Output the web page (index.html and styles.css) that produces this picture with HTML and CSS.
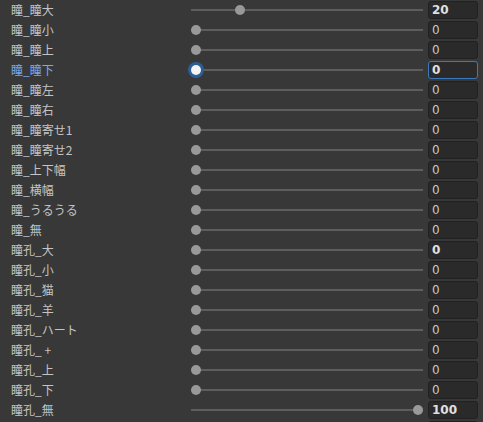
FILE: index.html
```html
<!DOCTYPE html>
<html>
<head>
    <meta charset="UTF-8">
    <title>BlendShapes</title>
    <link rel="stylesheet" href="styles.css">
</head>
<body>
    <div class="inspector">
        <div class="row">
            <div class="label">瞳_瞳大</div>
            <div class="slider" style="--v:20"><div class="track"></div><div class="thumb"></div></div>
            <div class="field bold">20</div>
        </div>
        <div class="row">
            <div class="label">瞳_瞳小</div>
            <div class="slider" style="--v:0"><div class="track"></div><div class="thumb"></div></div>
            <div class="field">0</div>
        </div>
        <div class="row">
            <div class="label">瞳_瞳上</div>
            <div class="slider" style="--v:0"><div class="track"></div><div class="thumb"></div></div>
            <div class="field">0</div>
        </div>
        <div class="row focused">
            <div class="label">瞳_瞳下</div>
            <div class="slider" style="--v:0"><div class="track"></div><div class="thumb"></div></div>
            <div class="field bold">0</div>
        </div>
        <div class="row">
            <div class="label">瞳_瞳左</div>
            <div class="slider" style="--v:0"><div class="track"></div><div class="thumb"></div></div>
            <div class="field">0</div>
        </div>
        <div class="row">
            <div class="label">瞳_瞳右</div>
            <div class="slider" style="--v:0"><div class="track"></div><div class="thumb"></div></div>
            <div class="field">0</div>
        </div>
        <div class="row">
            <div class="label">瞳_瞳寄せ1</div>
            <div class="slider" style="--v:0"><div class="track"></div><div class="thumb"></div></div>
            <div class="field">0</div>
        </div>
        <div class="row">
            <div class="label">瞳_瞳寄せ2</div>
            <div class="slider" style="--v:0"><div class="track"></div><div class="thumb"></div></div>
            <div class="field">0</div>
        </div>
        <div class="row">
            <div class="label">瞳_上下幅</div>
            <div class="slider" style="--v:0"><div class="track"></div><div class="thumb"></div></div>
            <div class="field">0</div>
        </div>
        <div class="row">
            <div class="label">瞳_横幅</div>
            <div class="slider" style="--v:0"><div class="track"></div><div class="thumb"></div></div>
            <div class="field">0</div>
        </div>
        <div class="row">
            <div class="label">瞳_うるうる</div>
            <div class="slider" style="--v:0"><div class="track"></div><div class="thumb"></div></div>
            <div class="field">0</div>
        </div>
        <div class="row">
            <div class="label">瞳_無</div>
            <div class="slider" style="--v:0"><div class="track"></div><div class="thumb"></div></div>
            <div class="field">0</div>
        </div>
        <div class="row">
            <div class="label">瞳孔_大</div>
            <div class="slider" style="--v:0"><div class="track"></div><div class="thumb"></div></div>
            <div class="field bold">0</div>
        </div>
        <div class="row">
            <div class="label">瞳孔_小</div>
            <div class="slider" style="--v:0"><div class="track"></div><div class="thumb"></div></div>
            <div class="field">0</div>
        </div>
        <div class="row">
            <div class="label">瞳孔_猫</div>
            <div class="slider" style="--v:0"><div class="track"></div><div class="thumb"></div></div>
            <div class="field">0</div>
        </div>
        <div class="row">
            <div class="label">瞳孔_羊</div>
            <div class="slider" style="--v:0"><div class="track"></div><div class="thumb"></div></div>
            <div class="field">0</div>
        </div>
        <div class="row">
            <div class="label">瞳孔_ハート</div>
            <div class="slider" style="--v:0"><div class="track"></div><div class="thumb"></div></div>
            <div class="field">0</div>
        </div>
        <div class="row">
            <div class="label">瞳孔_ +</div>
            <div class="slider" style="--v:0"><div class="track"></div><div class="thumb"></div></div>
            <div class="field">0</div>
        </div>
        <div class="row">
            <div class="label">瞳孔_上</div>
            <div class="slider" style="--v:0"><div class="track"></div><div class="thumb"></div></div>
            <div class="field">0</div>
        </div>
        <div class="row">
            <div class="label">瞳孔_下</div>
            <div class="slider" style="--v:0"><div class="track"></div><div class="thumb"></div></div>
            <div class="field">0</div>
        </div>
        <div class="row">
            <div class="label">瞳孔_無</div>
            <div class="slider" style="--v:100"><div class="track"></div><div class="thumb"></div></div>
            <div class="field bold">100</div>
        </div>
        <div class="row">
            <div class="label"></div>
            <div class="slider"></div>
            <div class="field"></div>
        </div>
    </div>
</body>
</html>
```

FILE: styles.css
```css
:root {
    --bg-color: #383838;
    --text-color: #c4c4c4;
    --field-bg: #2a2a2a;
    --field-border: #212121;
    --track-color: #5e5e5e;
    --thumb-color: #999999;
    --focus-color: #3a79bb;
    --focus-text: #7ca8e8;
}

* {
    box-sizing: border-box;
    margin: 0;
    padding: 0;
}

html, body {
    height: 100%;
    overflow: hidden;
}

body {
    background-color: var(--bg-color);
    color: var(--text-color);
    font-family: "Noto Sans CJK JP", "DejaVu Sans", sans-serif;
    font-size: 12px;
}

.inspector {
    display: flex;
    flex-direction: column;
}

.row {
    display: flex;
    align-items: center;
    height: 20px;
    padding: 0 5px 0 11px;
}

.label {
    width: 174px;
    white-space: nowrap;
    line-height: 20px;
}

.slider {
    position: relative;
    width: 232px;
    height: 20px;
    margin-left: 6px;
}

.track {
    position: absolute;
    left: 0;
    right: 0;
    top: 9px;
    height: 2px;
    background: var(--track-color);
}

.thumb {
    position: absolute;
    top: 5px;
    left: calc(var(--v) * 2.22px);
    width: 10px;
    height: 10px;
    border-radius: 50%;
    background: var(--thumb-color);
}

.field {
    width: 50px;
    height: 18px;
    margin-left: 5px;
    padding-left: 3px;
    background: var(--field-bg);
    border: 1px solid var(--field-border);
    border-radius: 3px;
    font-family: "DejaVu Sans", sans-serif;
    font-size: 12px;
    line-height: 16px;
    color: #c8c8c8;
}

.field.bold {
    font-weight: bold;
    color: #e0e0e0;
}

.focused .label {
    color: var(--focus-text);
}

.focused .thumb {
    background: #f4f4f4;
    box-shadow: 0 0 0 3px #2c5f96;
}

.focused .field {
    border-color: var(--focus-color);
}
```
